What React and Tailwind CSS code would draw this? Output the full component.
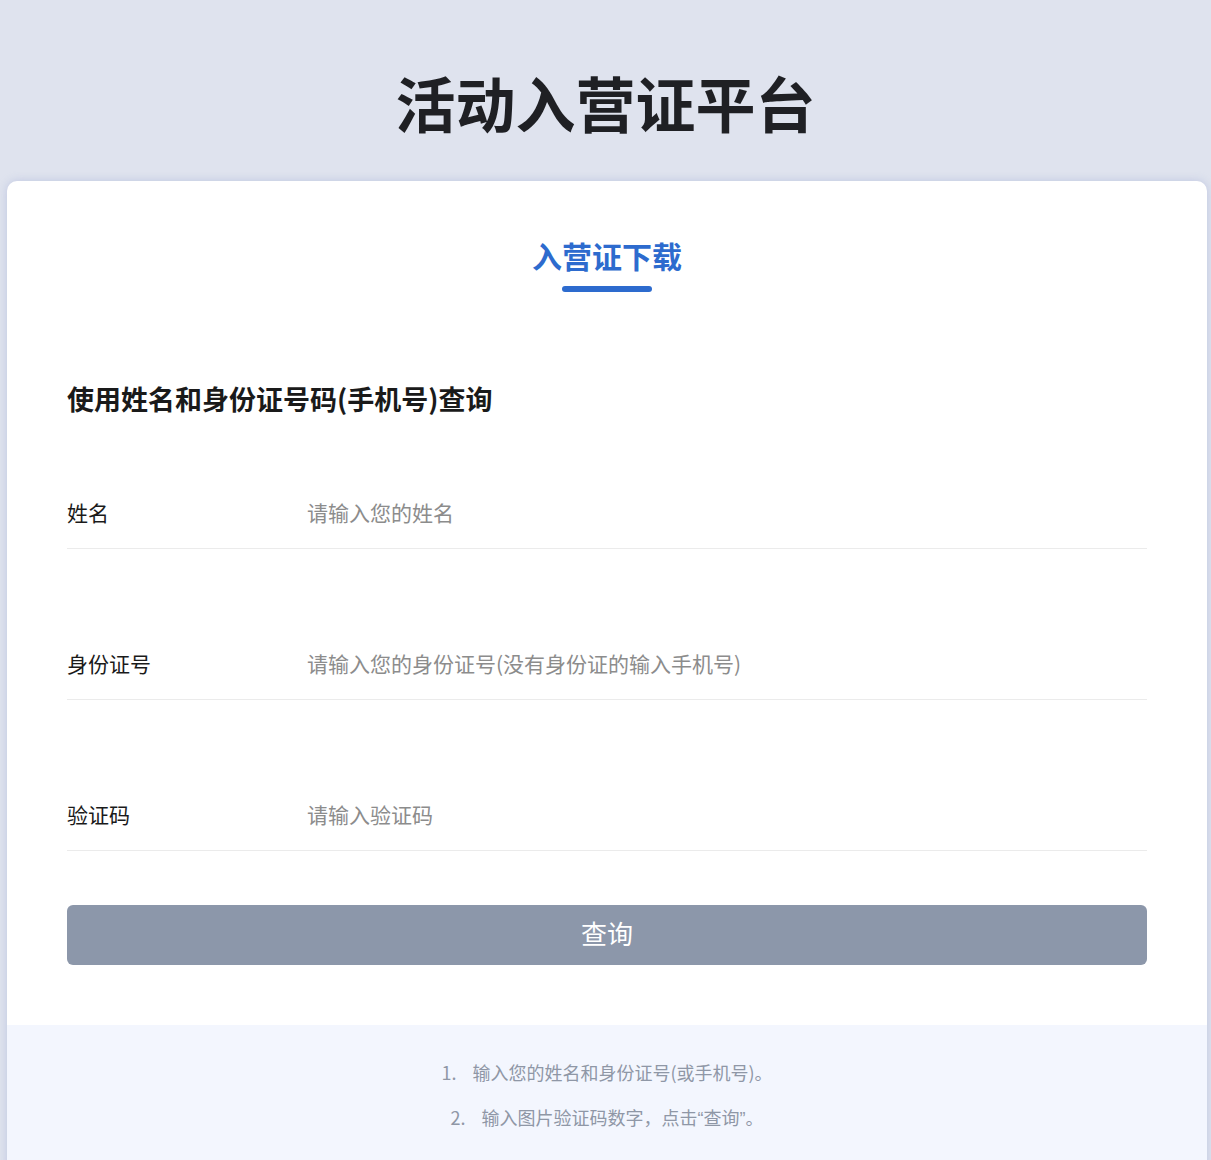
import React from "react";

const rows = [
  { label: "姓名", ph: "请输入您的姓名" },
  { label: "身份证号", ph: "请输入您的身份证号(没有身份证的输入手机号)" },
  { label: "验证码", ph: "请输入验证码" },
];

const cjk = '"Noto Sans CJK SC", "Noto Sans", sans-serif';

export default function App() {
  return (
    <div className="min-h-[1160px] bg-[#dfe3ee] overflow-hidden" style={{ fontFamily: cjk }}>
      <div className="pt-[57px] pb-[34px] text-center">
        <h1 className="text-[60px] leading-[90px] font-bold text-[#1f2024]">活动入营证平台</h1>
      </div>
      <div className="ml-[7px] w-[1200px] bg-white rounded-[10px] shadow-[0_0_10px_rgba(150,165,210,0.45)] overflow-hidden">
        <div className="pt-[57px] flex flex-col items-center">
          <div className="text-[30px] leading-[35px] font-bold text-[#2d6bce]">入营证下载</div>
          <div className="mt-[13px] w-[90px] h-[6px] rounded-full bg-[#2d6bce]" />
        </div>
        <div className="px-[60px]">
          <h2 className="mt-[87px] text-[27px] leading-[40px] font-bold text-[#1a1a1a]">
            使用姓名和身份证号码(手机号)查询
          </h2>
          {rows.map((r, i) => (
            <div
              key={r.label}
              className={
                (i === 0 ? "pt-[78px] " : "pt-[99px] ") +
                "pb-[21px] flex items-center border-b border-[#ebebeb]"
              }
            >
              <div className="w-[240px] text-[21px] leading-[30px] text-[#1a1a1a]">{r.label}</div>
              <input
                className="flex-1 text-[21px] leading-[30px] h-[30px] outline-none bg-transparent text-[#333] placeholder:text-[#8c8c8c]"
                style={{ fontFamily: cjk }}
                placeholder={r.ph}
              />
            </div>
          ))}
          <button
            className="mt-[54px] w-full h-[60px] rounded-[6px] bg-[#8c97aa] text-white text-[26px] leading-[56px] pb-[4px] flex items-center justify-center"
            style={{ fontFamily: cjk }}
          >
            查询
          </button>
        </div>
        <div className="mt-[60px] bg-[#f3f6fe] pt-[32px] pb-[40px] flex flex-col items-center gap-[15px] text-[18px] leading-[30px] text-[#8f97a6]">
          <div>
            <span className="mr-[16px]">1.</span>输入您的姓名和身份证号(或手机号)。
          </div>
          <div>
            <span className="mr-[16px]">2.</span>输入图片验证码数字，点击
            <span style={{ fontFamily: '"Liberation Sans", sans-serif' }}>“</span>查询
            <span style={{ fontFamily: '"Liberation Sans", sans-serif' }}>”</span>。
          </div>
        </div>
      </div>
    </div>
  );
}
